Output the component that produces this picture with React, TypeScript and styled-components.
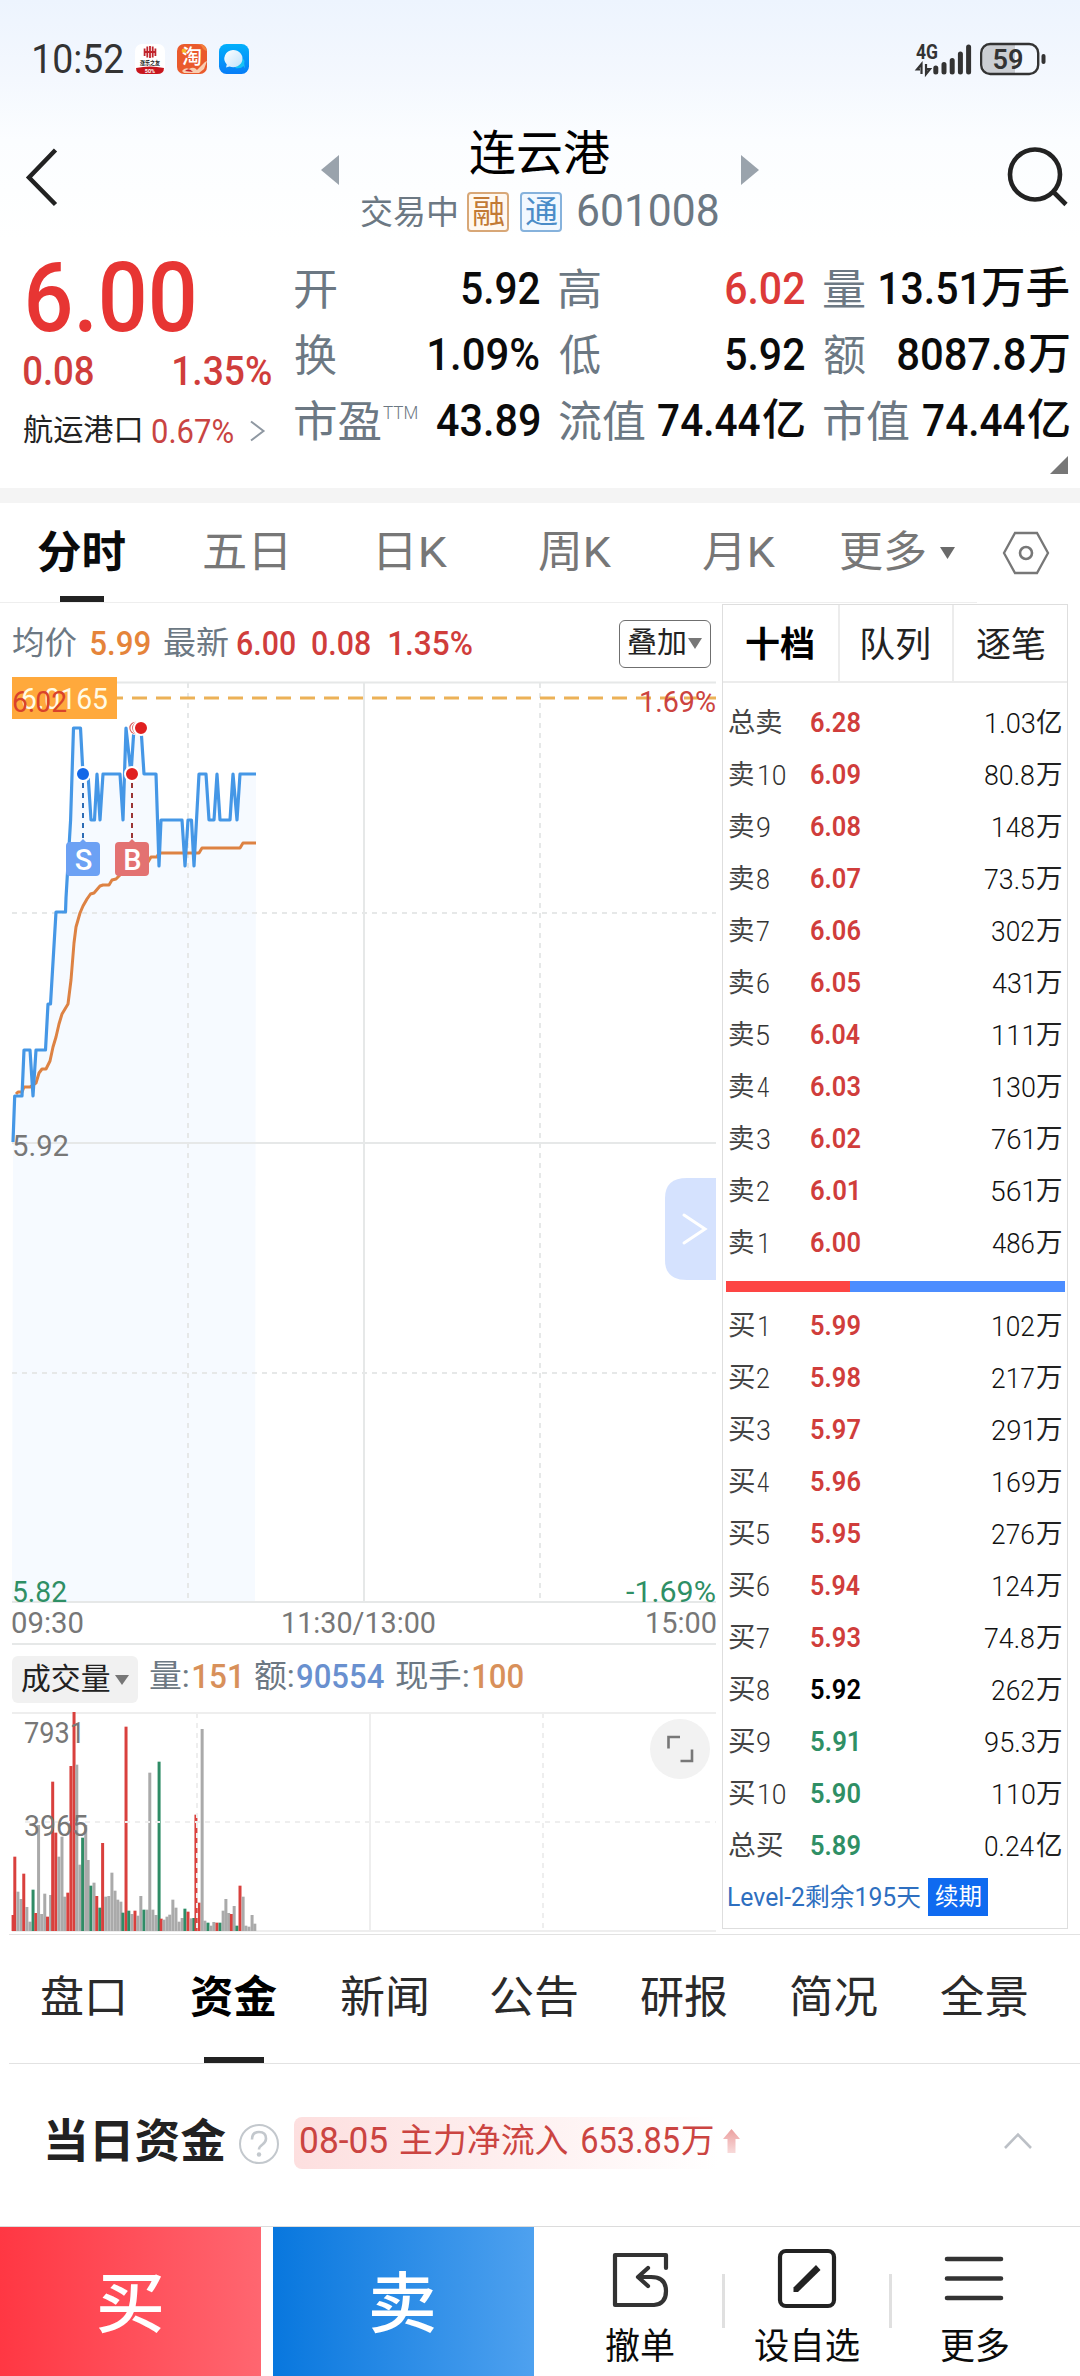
import React, { useLayoutEffect, useRef, useState } from 'react';
import styled, { createGlobalStyle } from 'styled-components';

const GlobalStyle = createGlobalStyle`
  * { box-sizing: border-box; }
  body { margin: 0; background: #fff; font-family: Roboto, "Noto Sans CJK SC", sans-serif; }
`;

const RED = '#d03d3b';
const GREEN = '#2f8f65';
const SLATE = '#6c7883';
const INK = '#0b0b0b';

/* ---------- fitted text ---------- */

const TextBox = styled.span<{ $size: number; $color: string; $weight: number; $ml: number }>`
  display: block;
  flex: none;
  margin-left: ${(p) => p.$ml}px;
  font-size: ${(p) => p.$size}px;
  font-weight: ${(p) => p.$weight};
  color: ${(p) => p.$color};
  line-height: 1;
  height: 1em;
  white-space: nowrap;
`;

const Glyphs = styled.span`
  display: inline-block;
  line-height: 1;
  vertical-align: top;
  transform-origin: 0 0;
`;

type TProps = { s: number; c?: string; b?: number; w?: number; ml?: number; dy?: number; children: string };

/* Condenses its text so that the visible glyphs span exactly w pixels. */
function T({ s, c = INK, b = 400, w, ml = 0, dy = 0, children }: TProps) {
  const ref = useRef<HTMLSpanElement>(null);
  const [fit, setFit] = useState({ k: 1, x: 0 });
  useLayoutEffect(() => {
    if (!w || !ref.current) return;
    const ctx = document.createElement('canvas').getContext('2d');
    if (!ctx) return;
    ctx.font = getComputedStyle(ref.current).font;
    const m = ctx.measureText(children);
    const k = w / (m.actualBoundingBoxLeft + m.actualBoundingBoxRight);
    setFit({ k, x: m.actualBoundingBoxLeft * k });
  }, [w, s, b, children]);
  return (
    <TextBox $size={s} $color={c} $weight={b} $ml={ml} style={w ? { width: w } : undefined}>
      <Glyphs ref={ref} style={{ transform: `translate(${fit.x}px, ${dy}px) scaleX(${fit.k})` }}>{children}</Glyphs>
    </TextBox>
  );
}

/* ---------- layout ---------- */

const Page = styled.main`
  width: 1080px;
  height: 2376px;
  overflow: hidden;
  display: flex;
  flex-direction: column;
  background: linear-gradient(#edf4fe 0, #f4f8fe 80px, #fbfdff 140px, #fff 240px);
`;

const StatusBar = styled.header`
  height: 118px;
  padding: 0 34px;
  display: flex;
  align-items: center;
  justify-content: space-between;
`;

const Cluster = styled.div`
  display: flex;
  align-items: center;
`;

const AppIcons = styled(Cluster)`
  gap: 12px;
  margin-left: 12px;
`;

const TitleBar = styled.div`
  height: 124px;
  display: grid;
  grid-template-columns: 321px 438px 321px;
`;

const TitleMid = styled.div`
  display: flex;
  flex-direction: column;
`;

const TitleRow = styled.div`
  height: 74px;
  padding-top: 30px;
  display: flex;
  align-items: center;
  justify-content: space-between;
`;

const SubRow = styled.div`
  height: 40px;
  padding-left: 40px;
  display: flex;
  align-items: center;
`;

const Tag = styled.span<{ $c: string; $bg: string; $ml: number }>`
  width: 42px;
  height: 40px;
  margin-left: ${(p) => p.$ml}px;
  border: 2px solid ${(p) => p.$c};
  border-radius: 4px;
  background: ${(p) => p.$bg};
  display: flex;
  align-items: center;
  justify-content: center;
`;

const Quote = styled.section`
  height: 246px;
  display: grid;
  grid-template-columns: 295px 785px;
`;

const PriceCol = styled.div`
  padding: 7px 0 0 24px;
`;

const Big = styled.div`
  height: 98px;
  padding-left: 4px;
  display: flex;
  align-items: center;
`;

const Changes = styled.div`
  height: 50px;
  width: 247px;
  display: flex;
  align-items: center;
  justify-content: space-between;
`;

const Sector = styled.div`
  height: 68px;
  display: flex;
  align-items: center;
`;

const Stats = styled.div`
  padding: 13px 11px 0 0;
  display: grid;
  grid-template-columns: 244px 245px 245px;
  column-gap: 20px;
  grid-auto-rows: 66px;
  align-content: start;
`;

const Stat = styled.div`
  display: flex;
  align-items: center;
`;

const Push = styled.div`
  margin-left: auto;
  display: flex;
  align-items: center;
`;

const CornerRow = styled.div`
  grid-column: 1 / -1;
  height: 21px;
  display: flex;
  justify-content: flex-end;
  align-items: flex-end;
  padding-right: 1px;
`;

const Band = styled.div`
  height: 15px;
  flex: none;
  background: #f4f4f4;
`;

const PeriodTabs = styled.nav`
  height: 100px;
  display: flex;
`;

const PeriodTab = styled.div<{ $w: number; $line?: boolean }>`
  width: ${(p) => p.$w}px;
  height: 100px;
  display: flex;
  flex-direction: column;
  align-items: center;
  justify-content: space-between;
  padding-top: 28px;
  border-bottom: 1px solid ${(p) => (p.$line === false ? 'transparent' : '#eeeeee')};
`;

const Underline = styled.i<{ $w: number }>`
  width: ${(p) => p.$w}px;
  height: 6px;
  background: #222;
`;

const Main = styled.section`
  height: 1331px;
  display: flex;
`;

const ChartCol = styled.div`
  width: 710px;
  margin-left: 12px;
  display: flex;
  flex-direction: column;
`;

const InfoRow = styled.div`
  height: 74px;
  padding: 5px 11px 0 1px;
  display: flex;
  align-items: center;
`;

const OverlayButton = styled.button`
  all: unset;
  box-sizing: border-box;
  margin-left: auto;
  width: 92px;
  height: 48px;
  margin-top: 2px;
  padding: 0 8px;
  border: 1.5px solid #6f6f6f;
  border-radius: 6px;
  display: flex;
  align-items: center;
  justify-content: space-between;
`;

const VolRow = styled.div`
  height: 60px;
  display: flex;
  align-items: center;
`;

const VolButton = styled.button`
  all: unset;
  box-sizing: border-box;
  width: 126px;
  height: 47px;
  margin-top: 7px;
  padding: 0 9px 0 10px;
  border-radius: 6px;
  background: #f1f1f1;
  display: flex;
  align-items: center;
  justify-content: space-between;
`;

const Svg = styled.svg`
  display: block;
  flex: none;
  overflow: visible;
`;

const Book = styled.aside`
  width: 346px;
  height: 1325px;
  margin-top: 1px;
  border: 1px solid #dedede;
  display: flex;
  flex-direction: column;
`;

const BookTabs = styled.div`
  height: 78px;
  border-bottom: 2px solid #ececec;
  display: grid;
  grid-template-columns: 1fr 1fr 1fr;
`;

const BookTab = styled.div`
  display: flex;
  align-items: center;
  justify-content: center;
  padding-top: 5px;
  & + & { border-left: 2px solid #ececec; }
`;

const Levels = styled.div<{ $pt: number }>`
  padding: ${(p) => p.$pt}px 6px 0 6px;
`;

const Level = styled.div`
  height: 52px;
  display: grid;
  grid-template-columns: 82px 90px 1fr;
  align-items: center;
`;

const Ratio = styled.div`
  height: 11px;
  margin: 12px 2px 0 3px;
  display: grid;
  grid-template-columns: 124px 1fr;
  background: #4c8dff;
  & > i { background: #fd4544; }
`;

const Renew = styled.div`
  display: flex;
  align-items: center;
  height: 38px;
  margin: 6px 0 0 6px;
`;

const RenewButton = styled.button`
  all: unset;
  width: 60px;
  height: 38px;
  margin-left: 7px;
  background: #0f6af0;
  display: flex;
  align-items: center;
  justify-content: center;
`;

const NewsTabs = styled.nav`
  height: 130px;
  margin-left: 9px;
  border-top: 1px solid #e2e2e2;
  border-bottom: 1px solid #e2e2e2;
  display: grid;
  grid-template-columns: repeat(7, 150px);
`;

const NewsTab = styled.div`
  display: flex;
  flex-direction: column;
  align-items: center;
  justify-content: space-between;
  padding-top: 41px;
`;

const Funds = styled.section`
  height: 162px;
  padding: 0 47px 9px;
  display: flex;
  align-items: center;
`;

const Pill = styled.div`
  height: 52px;
  width: 424px;
  margin-left: 15px;
  margin-top: 4px;
  padding: 0 0 4px 7px;
  border-radius: 8px 0 0 8px;
  background: linear-gradient(90deg, #fddfdf, #fff);
  display: flex;
  align-items: center;
`;

const TradeBar = styled.footer`
  height: 150px;
  border-top: 1px solid #dcdcdc;
  display: flex;
`;

const Trade = styled.button<{ $bg: string; $mr: number }>`
  all: unset;
  width: 261px;
  height: 149px;
  margin-right: ${(p) => p.$mr}px;
  background: ${(p) => p.$bg};
  display: flex;
  align-items: center;
  justify-content: center;
`;

const Action = styled.div`
  width: 164px;
  height: 149px;
  display: flex;
  flex-direction: column;
  align-items: center;
  justify-content: space-between;
  padding: 20px 0 11px;
`;

const Sep = styled.i`
  width: 3px;
  height: 54px;
  margin-top: 47px;
  background: #e0e0e0;
`;

/* ---------- small drawings ---------- */

const Tri = ({ dir, w, h, c }: { dir: 'l' | 'r' | 'd'; w: number; h: number; c: string }) => {
  const pts = { l: `0,${h / 2} ${w},0 ${w},${h}`, r: `${w},${h / 2} 0,0 0,${h}`, d: `0,0 ${w},0 ${w / 2},${h}` }[dir];
  return <Svg width={w} height={h}><polygon points={pts} fill={c} /></Svg>;
};

const BankIcon = () => (
  <Svg width="30" height="30" viewBox="0 0 30 30">
    <rect width="30" height="30" rx="7" fill="#fff" />
    <g stroke="#c0232b" strokeWidth="1.8" fill="none">
      <path d="M15 2v12M12.300 2.500v11M17.700 2.500v11M9.600 4.500v7.500M20.400 4.500v7.500M9 8h12" />
    </g>
    <text x="5" y="21" fontSize="6" fontWeight="700" textLength="20" lengthAdjust="spacingAndGlyphs" fill="#222">涨乐之友</text>
    <path d="M1 24q14-3 28 0q0 6-7 6H8q-7 0-7-6z" fill="#c8151d" />
    <text x="15" y="28.500" fontSize="5.500" fontWeight="700" textAnchor="middle" fill="#fff">50%</text>
  </Svg>
);

const TaoIcon = () => (
  <Svg width="30" height="30" viewBox="0 0 30 30">
    <rect width="30" height="30" rx="7" fill="#ea5a2c" />
    <circle cx="7" cy="7" r="2.400" fill="#f8b62b" />
    <path d="M18 0h5q6 1 7 7q-4-1-5-4t-7-3z" fill="#f2813c" />
    <path d="M5 27q3-4 7-2q5-3 8 1l8-8 2-1-3 8-5 4H7z" fill="#f9cdb0" />
    <path d="M8 27q4-4 8 1z" fill="#c9252b" />
    <text x="15" y="20" fontSize="20" fontWeight="500" textAnchor="middle" fill="#fff">淘</text>
  </Svg>
);

const ChatIcon = () => (
  <Svg width="30" height="30" viewBox="0 0 30 30">
    <defs>
      <linearGradient id="chat" x1="0" y1="0" x2="0" y2="1"><stop offset="0" stopColor="#02b0fb" /><stop offset="1" stopColor="#077df7" /></linearGradient>
      <linearGradient id="bub" x1="0" y1="0" x2="1" y2="1"><stop offset="0" stopColor="#fff" /><stop offset="1" stopColor="#bfe2fb" /></linearGradient>
    </defs>
    <rect width="30" height="30" rx="7.500" fill="url(#chat)" />
    <path d="M16 24q6 1 8.500-2l1.500 2.500-.8-5q1-3-1.200-5z" fill="#16c2f5" />
    <path d="M14 6a9.300 8.600 0 1 1-3.500 16.500L7 23.500l.8-3A8.900 8.600 0 0 1 14 6z" fill="url(#bub)" />
  </Svg>
);

const Signal = () => (
  <Svg width="56" height="32" viewBox="915 43 56 32">
    <text x="915" y="59" fontSize="20" fontWeight="700" fill="#333" textLength="22" lengthAdjust="spacingAndGlyphs">4G</text>
    <path d="M920.500 74V64L916 69.500H919M925 64V74L929 69H926" fill="none" stroke="#333" strokeWidth="2.200" />
    <g stroke="#333" strokeWidth="5" strokeLinecap="round">
      <path d="M934.800 68v4M943 64.500v7.500M951.200 60.500v11.500M959.400 54v18M967.600 47v25" />
    </g>
  </Svg>
);

const Battery = () => (
  <Svg width="66" height="34" viewBox="980 42 66 34">
    <path d="M990 45h25v28h-25q-7-1-7-8V53q0-7 7-8z" fill="#cbced3" />
    <rect x="981.200" y="44" width="57" height="30" rx="9" fill="none" stroke="#333" strokeWidth="2.400" />
    <rect x="1041.500" y="54" width="4" height="10" rx="2" fill="#333" />
    <text x="992.500" y="69" fontSize="28" fontWeight="600" fill="#333" textLength="31" lengthAdjust="spacingAndGlyphs">59</text>
  </Svg>
);

/* ---------- data ---------- */

const PRICE = '13,1142 14.7,1096 22,1096 24,1050 30,1050 33,1096 36,1050 45.5,1050 48,1004 50.5,1004 56,912 65.500,912 66,898 70.600,820 73.500,728 80.500,728 83,774 88,774 91,820 94.500,820 97,774 100,820 103,774 120,774 123,820 126,728 131,774 134,728 141,728 144,774 156,774 159,866 161,820 182,820 185,866 188,820 191.500,820 194,866 199,774 206,774 209,820 214,820 217,774 220,820 230,820 233,774 237,820 240,774 256,774';
const AVG = '16,1094 18,1092 22,1092 24,1087 30,1087 36,1083 39,1073 42,1069 46,1069 50,1061 53,1047 56,1037 59,1024 62,1014 68,1004 71,980 74,943 76,927 80,913 83,906 87,899 90.500,894 94,893 100,886 103,885 109,885 112,880 116,879 121,874 132,867 143,862 148,862 151,857 157,857 159,853 199,853 202,848 240,848 243,843 256,843';

/* x, top, kind: r = up, G = down, g = flat */
const VOLUME = '38 1065 r,43 890 r,52 995 g,61 1017 g,69 941 r,78 1041 g,87 1085 g,96 989 G,104 1059 r,112 795 g,121 1062 g,130 1001 g,138 1070 r,147 1005 g,153 665 r,162 818 r,171 890 g,180 830 g,188 1010 g,197 998 r,206 618 r,215 456 r,223 614 g,232 914 g,240 833 G,249 795 g,256 900 g,264 977 G,273 968 g,281 1008 r,290 1043 G,298 849 r,307 1010 g,316 1008 g,325 938 g,334 992 g,342 1019 g,351 1025 g,357 1058 G,366 500 r,374 1052 G,383 1062 g,392 1052 r,400 1067 g,409 1008 g,418 1049 G,427 1049 g,435 638 g,444 1049 g,453 1065 g,462 605 G,468 1076 r,476 1079 g,485 1070 g,493 1064 g,502 1019 g,511 1043 g,520 1085 g,529 1074 g,537 1046 G,546 1055 r,555 1075 g,563 1074 G,569 764 r,578 1028 r,587 507 g,595 1082 g,604 1088 G,613 1097 g,621 1086 g,630 1088 r,639 1088 G,648 1052 g,656 1017 g,664 1059 g,672 1062 r,680 1038 g,688 1097 G,697 977 r,706 1010 g,714 1097 g,723 1100 g,732 1065 g,740 1091 g'
  .split(',')
  .map((v) => v.split(' '))
  .map(([x, y, k]) => ({ x: Number(x) / 2.904, y: 1560 + Number(y) / 3, k }));

const SELL: [string, string, string][] = [
  ['总卖', '6.28', '1.03亿'], ['卖10', '6.09', '80.8万'], ['卖9', '6.08', '148万'], ['卖8', '6.07', '73.5万'],
  ['卖7', '6.06', '302万'], ['卖6', '6.05', '431万'], ['卖5', '6.04', '111万'], ['卖4', '6.03', '130万'],
  ['卖3', '6.02', '761万'], ['卖2', '6.01', '561万'], ['卖1', '6.00', '486万'],
];
const BUY: [string, string, string][] = [
  ['买1', '5.99', '102万'], ['买2', '5.98', '217万'], ['买3', '5.97', '291万'], ['买4', '5.96', '169万'],
  ['买5', '5.95', '276万'], ['买6', '5.94', '124万'], ['买7', '5.93', '74.8万'], ['买8', '5.92', '262万'],
  ['买9', '5.91', '95.3万'], ['买10', '5.90', '110万'], ['总买', '5.89', '0.24亿'],
];

const priceColor = (p: string) => (Number(p) > 5.92 ? RED : Number(p) < 5.92 ? GREEN : '#000');
/* Ink width of a thin figure in the order book: 14.8px a digit, 7px a point. */
const figWidth = (n: string) => [...n].reduce((a, ch) => a + (ch === '.' ? 7 : 14.8), 0) - (n[0] === '1' ? 3 : 2) - (n.endsWith('1') ? 3 : 0);

const LevelRow = ({ row: [name, price, amount] }: { row: [string, string, string] }) => {
  const digits = name.replace(/\D/g, '');
  const num = amount.slice(0, -1);
  return (
    <Level>
      <Cluster>
        <T s={27.5} c="#444" w={digits ? 25 : 53}>{digits ? name[0] : name}</T>
        {digits && <T s={28} b={300} c="#333" w={digits === '10' ? 26 : digits === '1' ? 7 : 12.5} ml={digits[0] === '1' ? 5 : 3} dy={1}>{digits}</T>}
      </Cluster>
      <T s={28} b={600} c={priceColor(price)} w={price.endsWith('1') ? 46 : 49}>{price}</T>
      <Push>
        <T s={28} b={300} c="#111" w={figWidth(num)} dy={1}>{num}</T>
        <T s={27.5} c="#222" w={25} ml={num.endsWith('1') ? 5 : 2}>{amount.slice(-1)}</T>
      </Push>
    </Level>
  );
};

/* ---------- charts ---------- */

type LabelProps = { x: number; y: number; w: number; c: string; s?: number; b?: number; children: string };
const Label = ({ x, y, w, c, s = 30, b = 400, children }: LabelProps) => (
  <text x={x} y={y} fontSize={s} fontWeight={b} fill={c} textLength={w} lengthAdjust="spacingAndGlyphs">{children}</text>
);

const PriceChart = () => (
  <Svg width="706" height="969" viewBox="12 677 706 969">
    <polygon points={`12,1602 ${PRICE} 255,1602`} fill="#f6faff" />
    <g fill="none" stroke="#e6e8e8" strokeWidth="2">
      <path d="M12 682.500H716M12 1602H716M12 1143H716M12 1644H716" />
      <path d="M364 682V1602" />
      <path strokeDasharray="5 5" d="M188 683V1602M540 683V1602M12 913H716M12 1373H716" />
    </g>
    <path d="M117 698H716" stroke="#ecb157" strokeWidth="3" strokeDasharray="15 9" strokeDashoffset="9" />
    <polyline points={AVG} fill="none" stroke="#dd8243" strokeWidth="3" strokeLinejoin="round" />
    <polyline points={PRICE} fill="none" stroke="#4597e6" strokeWidth="3.200" strokeLinejoin="round" />
    <rect x="12" y="677" width="105" height="42" fill="#ffa93c" />
    <Label x={21} y={709} w={87} c="#fffbe6">6.0165</Label>
    <Label x={12} y={712} w={55} c="#d9432a">6.02</Label>
    <Label x={639} y={712} w={77} c="#cc4340">1.69%</Label>
    <Label x={12} y={1155.5} w={57} c="#777">5.92</Label>
    <Label x={12} y={1602} w={55} c={GREEN}>5.82</Label>
    <Label x={626} y={1602} w={90} c={GREEN}>-1.69%</Label>
    <Label x={11} y={1633} w={73} c="#777">09:30</Label>
    <Label x={281} y={1633} w={155} c="#777">11:30/13:00</Label>
    <Label x={645} y={1633} w={72} c="#777">15:00</Label>

    <path d="M83 783V838" stroke="#2d6cb5" strokeWidth="2" strokeDasharray="5 5" />
    <path d="M132 783V838" stroke="#9b3535" strokeWidth="2" strokeDasharray="5 5" />
    {[135.500, 138.300].map((x) => (
      <g key={x}>
        <circle cx={x} cy="728" r="7" fill="#fff" />
        <circle cx={x} cy="728" r="5.600" fill="#fff" stroke="#d66" strokeWidth="1.200" />
      </g>
    ))}
    <g stroke="#fff" strokeWidth="2">
      <circle cx="83" cy="774" r="7" fill="#1468e8" />
      <circle cx="132" cy="774" r="7" fill="#e02020" />
      <circle cx="141" cy="728" r="7" fill="#e02020" />
    </g>
    <path d="M79 843l4-4 4 4z" fill="#6ca1f4" />
    <path d="M128 843l4-4 4 4z" fill="#e37272" />
    <rect x="66" y="842" width="34" height="34" rx="4" fill="#6ca1f4" />
    <rect x="115" y="842" width="34" height="34" rx="4" fill="#e37272" />
    <text x="83.500" y="870" textAnchor="middle" fontSize="29" fontWeight="500" fill="#fff">S</text>
    <text x="132.500" y="870" textAnchor="middle" fontSize="29" fontWeight="500" fill="#fff">B</text>

    <path d="M716 1178V1280H687Q665 1280 665 1260V1198Q665 1178 687 1178Z" fill="#d5e2fe" />
    <path d="M684 1215L705 1229L684 1243" fill="none" stroke="#fff" strokeWidth="3" strokeLinecap="round" />
  </Svg>
);

const VolumeChart = () => (
  <Svg width="706" height="227" viewBox="12 1706 706 227">
    <g fill="none" stroke="#eeeeee" strokeWidth="2">
      <path d="M12 1713H716M12 1931H716M370 1713V1931" />
    </g>
    {VOLUME.map((v, i) => (
      <rect key={i} x={v.x - 1.5} y={v.y} width="3" height={1931 - v.y} fill={v.k === 'r' ? '#d9403d' : v.k === 'G' ? '#2f8c66' : '#aaa'} />
    ))}
    <path d="M197 1713V1931M543 1713V1931M25 1822H716" fill="none" stroke="#eeeeee" strokeWidth="2" strokeDasharray="5 5" />
    <Label x={24} y={1743} w={61} c="#777">7931</Label>
    <Label x={24} y={1836} w={64} c="#777">3965</Label>
    <circle cx="680" cy="1749" r="30" fill="#f2f2f2" />
    <path d="M668.500 1748.500V1737H680M692 1749.500V1761H680.500" fill="none" stroke="#777" strokeWidth="2.600" />
  </Svg>
);

/* ---------- app ---------- */

export default function App() {
  return (
    <>
      <GlobalStyle />
      <Page>
        <StatusBar>
          <Cluster>
            <T s={40} c="#333" w={89} dy={1}>10:52</T>
            <AppIcons><BankIcon /><TaoIcon /><ChatIcon /></AppIcons>
          </Cluster>
          <Cluster>
            <Signal />
            <Svg width="8" height="1" />
            <Battery />
          </Cluster>
        </StatusBar>

        <TitleBar>
          <Svg width="321" height="124" viewBox="0 118 321 124">
            <path d="M55.500 150L29 177.500L55.500 204.500" fill="none" stroke="#222" strokeWidth="4.500" />
          </Svg>
          <TitleMid>
            <TitleRow>
              <Tri dir="l" w={18} h={30} c="#9aa3ac" />
              <T s={48} c="#000" w={140} dy={-16}>连云港</T>
              <Tri dir="r" w={18} h={30} c="#9aa3ac" />
            </TitleRow>
            <SubRow>
              <T s={33} c={SLATE} w={95}>交易中</T>
              <Tag $c="#d8a777" $bg="#fff8f0" $ml={11}><T s={32} c="#c27a35" w={31}>融</T></Tag>
              <Tag $c="#86b2dc" $bg="#f1f8ff" $ml={11}><T s={32} c="#4a8cc8" w={31}>通</T></Tag>
              <T s={44} c={SLATE} w={140} ml={16} dy={-1}>601008</T>
            </SubRow>
          </TitleMid>
          <Svg width="321" height="124" viewBox="759 118 321 124">
            <circle cx="1035" cy="174.500" r="25" fill="none" stroke="#222" strokeWidth="4.600" />
            <path d="M1053 191.500L1066 204.500" stroke="#222" strokeWidth="4.600" />
          </Svg>
        </TitleBar>

        <Quote>
          <PriceCol>
            <Big><T s={97} b={500} c="#e73533" w={166}>6.00</T></Big>
            <Changes>
              <T s={40} b={500} c={RED} w={69}>0.08</T>
              <T s={40} b={500} c={RED} w={97}>1.35%</T>
            </Changes>
            <Sector>
              <T s={29.5} c="#222" w={116}>航运港口</T>
              <T s={33} c="#c94442" w={81} ml={12}>0.67%</T>
              <Svg width="16" height="24" viewBox="233 419 16 24">
                <path d="M251 421.500L263.500 431L251 440.500" fill="none" stroke="#8f98a2" strokeWidth="2" />
              </Svg>
            </Sector>
          </PriceCol>
          <Stats>
            <Stat><T s={43} c={SLATE} w={41} dy={2}>开</T><Push><T s={45} b={500} w={77}>5.92</T></Push></Stat>
            <Stat><T s={43} c={SLATE} w={41} dy={2}>高</T><Push><T s={45} b={500} c="#dc3a38" w={78}>6.02</T></Push></Stat>
            <Stat><T s={43} c={SLATE} w={41} dy={2}>量</T><Push><T s={45} b={500} w={94}>13.51</T><T s={43} b={500} w={87} ml={8}>万手</T></Push></Stat>
            <Stat><T s={43} c={SLATE} w={41} dy={2}>换</T><Push><T s={45} b={500} w={110}>1.09%</T></Push></Stat>
            <Stat><T s={43} c={SLATE} w={41} dy={2}>低</T><Push><T s={45} b={500} w={78}>5.92</T></Push></Stat>
            <Stat><T s={43} c={SLATE} w={41} dy={2}>额</T><Push><T s={45} b={500} w={127}>8087.8</T><T s={43} b={500} w={40} ml={4}>万</T></Push></Stat>
            <Stat>
              <T s={43} c={SLATE} w={86} dy={2}>市盈</T><T s={19} b={300} c={SLATE} w={34} ml={2} dy={-8}>TTM</T>
              <Push><T s={45} b={500} w={102}>43.89</T></Push>
            </Stat>
            <Stat><T s={43} c={SLATE} w={86} dy={2}>流值</T><Push><T s={45} b={500} w={102}>74.44</T><T s={43} b={500} w={41} ml={3}>亿</T></Push></Stat>
            <Stat><T s={43} c={SLATE} w={85} dy={2}>市值</T><Push><T s={45} b={500} w={102}>74.44</T><T s={43} b={500} w={41} ml={3}>亿</T></Push></Stat>
            <CornerRow><Svg width="18" height="18"><polygon points="18,0 18,18 0,18" fill="#777" /></Svg></CornerRow>
          </Stats>
        </Quote>
        <Band />

        <PeriodTabs>
          <PeriodTab $w={163}><T s={44} b={700} w={87}>分时</T><Underline $w={44} /></PeriodTab>
          <PeriodTab $w={163}><T s={43} c="#777" w={81}>五日</T></PeriodTab>
          <PeriodTab $w={167}><T s={43} c="#777" w={68} ml={6}>日K</T></PeriodTab>
          <PeriodTab $w={163}><T s={43} c="#777" w={72}>周K</T></PeriodTab>
          <PeriodTab $w={163}><T s={43} c="#777" w={72} ml={2}>月K</T></PeriodTab>
          <PeriodTab $w={158}>
            <Cluster><T s={43} c="#777" w={84}>更多</T><Svg width="15" height="1" /><Tri dir="d" w={15} h={12} c="#6a6a6a" /></Cluster>
          </PeriodTab>
          <PeriodTab $w={98} $line={false}>
            <Svg width="48" height="44" viewBox="0 0 48 44">
              <path d="M13 2H35L46 22L35 42H13L2 22Z" fill="none" stroke="#777" strokeWidth="2.300" />
              <circle cx="24" cy="22" r="6" fill="none" stroke="#777" strokeWidth="2.600" />
            </Svg>
          </PeriodTab>
        </PeriodTabs>

        <Main>
          <ChartCol>
            <InfoRow>
              <T s={32} c={SLATE} w={64}>均价</T>
              <T s={34} b={500} c="#e5843a" w={59} ml={14}>5.99</T>
              <T s={32} c={SLATE} w={64} ml={14}>最新</T>
              <T s={34} b={500} c={RED} w={58} ml={9}>6.00</T>
              <T s={34} b={500} c={RED} w={58} ml={17}>0.08</T>
              <T s={34} b={500} c={RED} w={83} ml={19}>1.35%</T>
              <OverlayButton><T s={29} c="#222" w={57}>叠加</T><Tri dir="d" w={14} h={11} c="#777" /></OverlayButton>
            </InfoRow>
            <PriceChart />
            <VolRow>
              <VolButton><T s={29.5} c="#222" w={88}>成交量</T><Tri dir="d" w={14} h={10} c="#777" /></VolButton>
              <T s={32} c={SLATE} w={38} ml={12}>量:</T>
              <T s={34} b={500} c="#d8905a" w={46} ml={5}>151</T>
              <T s={32} c={SLATE} w={38} ml={16}>额:</T>
              <T s={34} b={500} c="#6990cf" w={87} ml={4}>90554</T>
              <T s={32} c={SLATE} w={72} ml={12}>现手:</T>
              <T s={34} b={500} c="#d8905a" w={50} ml={5}>100</T>
            </VolRow>
            <VolumeChart />
          </ChartCol>
          <Book>
            <BookTabs>
              <BookTab><T s={35} b={700} c="#000" w={68}>十档</T></BookTab>
              <BookTab><T s={35} c="#222" w={67}>队列</T></BookTab>
              <BookTab><T s={35} c="#222" w={68}>逐笔</T></BookTab>
            </BookTabs>
            <Levels $pt={14}>{SELL.map((r) => <LevelRow key={r[0]} row={r} />)}</Levels>
            <Ratio><i /></Ratio>
            <Levels $pt={8}>{BUY.map((r) => <LevelRow key={r[0]} row={r} />)}</Levels>
            <Renew>
              <T s={25} c="#2e6fc0" w={192}>Level-2剩余195天</T>
              <RenewButton><T s={24} c="#fff" w={46}>续期</T></RenewButton>
            </Renew>
          </Book>
        </Main>

        <NewsTabs>
          {['盘口', '资金', '新闻', '公告', '研报', '简况', '全景'].map((name, i) => (
            <NewsTab key={name}>
              <T s={44} b={i === 1 ? 700 : 400} c={i === 1 ? '#000' : '#2a2a2a'} w={i ? 86 : 82} ml={i ? 0 : -4}>{name}</T>
              {i === 1 && <Underline $w={60} />}
            </NewsTab>
          ))}
        </NewsTabs>

        <Funds>
          <T s={46} b={700} c="#222" w={179}>当日资金</T>
          <Svg width="53" height="40" viewBox="-13 -3 53 40">
            <circle cx="20" cy="20" r="19" fill="none" stroke="#c3c8cd" strokeWidth="2" />
            <path d="M13 15.500q0-7.500 7-7.500t7 6.500q0 3.500-3.500 6t-3.500 5" fill="none" stroke="#c3c8cd" strokeWidth="2.600" />
            <circle cx="20" cy="30.500" r="2.200" fill="#c3c8cd" />
          </Svg>
          <Pill>
            <T s={36} c="#cb4441" w={86}>08-05</T>
            <T s={33.5} c="#cb4441" w={168} ml={13}>主力净流入</T>
            <T s={36} c="#cb4441" w={97} ml={14}>653.85</T>
            <T s={33.5} c="#cb4441" w={31} ml={3}>万</T>
          </Pill>
          <Svg width="22" height="24" viewBox="-5 0 22 24">
            <defs><linearGradient id="up" x1="0" y1="0" x2="0" y2="1"><stop offset="0" stopColor="#eba09f" /><stop offset="1" stopColor="#f8dada" /></linearGradient></defs>
            <path d="M8.500 0L17 10H12.500V24H4.500V10H0Z" fill="url(#up)" />
          </Svg>
          <Push>
            <Svg width="30" height="18" viewBox="0 0 30 18"><path d="M2 16L15 2.500L28 16" fill="none" stroke="#bcc0c6" strokeWidth="2.600" /></Svg>
          </Push>
        </Funds>

        <TradeBar>
          <Trade $bg="linear-gradient(90deg, #ff3743, #ff6670)" $mr={12}><T s={66} b={500} c="#fff" w={63} dy={3}>买</T></Trade>
          <Trade $bg="linear-gradient(90deg, #0877de, #4ea1ef)" $mr={24}><T s={66} b={500} c="#fff" w={63} dy={3}>卖</T></Trade>
          <Action>
            <Svg width="60" height="64" viewBox="611 2246 60 64">
              <path d="M667 2267V2254H616V2304H655Q667 2303 667 2290Q667 2276 652 2276H640M649 2267L639 2276L649 2285" fill="none" stroke="#333" strokeWidth="4.200" strokeLinejoin="round" strokeLinecap="round" />
            </Svg>
            <T s={36} w={68}>撤单</T>
          </Action>
          <Sep />
          <Action>
            <Svg width="60" height="64" viewBox="777 2246 60 64">
              <rect x="780" y="2250" width="54" height="55" rx="6" fill="none" stroke="#222" strokeWidth="4.200" />
              <path d="M793.500 2291V2286.500L816 2264L820.500 2269L798 2291Z" fill="#222" />
            </Svg>
            <T s={36} w={104}>设自选</T>
          </Action>
          <Sep />
          <Action>
            <Svg width="60" height="64" viewBox="944 2246 60 64">
              <path d="M947 2258H1001M947 2277.500H1001M947 2297H1001" stroke="#333" strokeWidth="4.600" strokeLinecap="round" />
            </Svg>
            <T s={36} w={67}>更多</T>
          </Action>
        </TradeBar>
      </Page>
    </>
  );
}
